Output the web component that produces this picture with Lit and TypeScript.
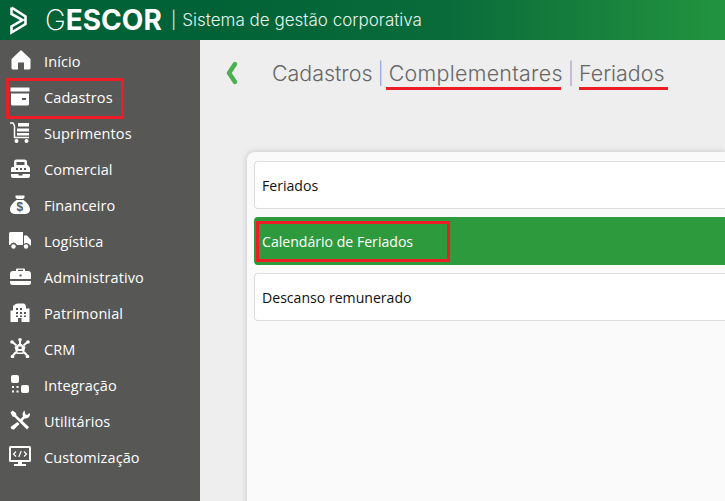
import { LitElement, html, css, svg } from "lit";
import { customElement } from "lit/decorators.js";

const icons: Record<string, unknown> = {
  home: svg`<path d="M9.5 0.5Q10 0.2 10.5 0.5L19.5 9V18Q19.5 19.5 18 19.5H13V12.5H7V19.5H2Q0.5 19.5 0.5 18V9Z"/>`,
  box: svg`<path d="M0.5 0.5H19.5V4.5H0.5Z"/><path fill-rule="evenodd" d="M1 6.5H19V17Q19 18.5 17.5 18.5H2.5Q1 18.5 1 17ZM12 11V13H16V11Z"/>`,
  cart: svg`<path d="M0 1H3L4.5 4V15.5H19" fill="none" stroke="#fff" stroke-width="1.5"/><path d="M8 1H19V4.5H8ZM7 6.5H19V9.5H7ZM7 11H19V13.5H7Z"/><circle cx="6.5" cy="19" r="2"/><circle cx="16.5" cy="19" r="2"/>`,
  bag: svg`<path fill-rule="evenodd" d="M3 8V3Q3 0.5 5.5 0.5H13.5Q16 0.5 16 3V5.5L18 7.5Q19 8.5 19 9.5V13H0V9.5Q0 8.5 1 8ZM5.5 3V6H13.5V3ZM5 9V11H7V9ZM9 9V11H11V9ZM13 9V11H15V9Z"/><path d="M0 15H7.5V16.5H11.5V15H19V17Q19 19 17 19H2Q0 19 0 17Z"/>`,
  money: svg`<path fill-rule="evenodd" d="M5.5 0.5H14.5V2.5L13 4H7L5.5 2.5ZM6.5 5H13.5C17 7.5 20 11 20 14.5C20 17.5 17.5 19 15 19H5C2.5 19 0 17.5 0 14.5C0 11 3 7.5 6.5 5Z"/><text x="10" y="16" font-size="12" font-weight="700" font-family="Liberation Sans" text-anchor="middle" fill="#575756">$</text>`,
  truck: svg`<path d="M0 1.5Q0 0 1.5 0H14V13H8Q7 10.5 4.5 10.5Q2 10.5 1.2 13H0ZM15 3.5H18L22 8V13.5H21Q20 11 17.5 11Q15.5 11 15 12Z"/><circle cx="4.5" cy="14.5" r="2.2"/><circle cx="17" cy="14.5" r="2.2"/>`,
  case: svg`<path fill-rule="evenodd" d="M6 3V1.5Q6 0.5 7 0.5H14Q15 0.5 15 1.5V3H18Q21 3 21 6V11H0V6Q0 3 3 3ZM8 1.8V3H13V1.8ZM9.5 6.5V8.5H11.5V6.5Z"/><path d="M0 13H21V14.5Q21 17 18.5 17H2.5Q0 17 0 14.5Z"/>`,
  city: svg`<path fill-rule="evenodd" d="M0.5 7.5H3V4Q3 2 4.5 2Q5 0.5 8 0.5H14Q16 1 16 4V5.5H19.5V19H11.5V15H8V19H0.5ZM6 5H8V7H6ZM10 5H12V7H10ZM6 9H8V11H6ZM10 9H12V11H10ZM14 9H16V11H14ZM6 12.5H8V14H6ZM10 12.5H12V14H10ZM14 12.5H16V14H14Z"/>`,
  crm: svg`<g stroke="#fff" stroke-width="2" fill="none"><path d="M10 2V6M2.5 4L6.5 7.5M17.5 4L13.5 7.5M2.5 18L6 14M17.5 18L14 14"/></g><circle cx="10" cy="1.8" r="1.8"/><circle cx="2" cy="4" r="1.8"/><circle cx="18" cy="4" r="1.8"/><circle cx="2.5" cy="18.5" r="1.8"/><circle cx="17.5" cy="18.5" r="1.8"/><path fill-rule="evenodd" d="M10 5L15.5 9L13.5 16H6.5L4.5 9ZM8.5 8.5V11H11.5V8.5ZM7.5 13V14.5H12.5V13Z"/>`,
  flow: svg`<rect x="1" y="0" width="8" height="8" rx="2"/><rect x="11" y="10" width="8" height="8" rx="2"/><path d="M2 11H4V13H2ZM6.5 11H8.5V13H6.5ZM2 15.5H4V17.5H2ZM6.5 15.5H8.5V17.5H6.5Z"/>`,
  tools: svg`<path d="M0.5 2.5L2.5 0.5L6 3L6.5 5.5L19 17L17 19.5L4.5 7L2.5 6.5Z"/><path d="M14.5 0.5Q13 1.5 12.5 4L13 6.5L10 9.5L12 11.5L14.5 8.5Q18.5 9 20 5Q20 3.5 19.5 3L17 5L15.5 4.5L15 3ZM7.5 12L9.5 14L4 19.5Q1 20 0.5 17Z"/>`,
  code: svg`<path fill-rule="evenodd" d="M1.5 0H20.5Q22 0 22 1.5V14.5Q22 16 20.5 16H1.5Q0 16 0 14.5V1.5Q0 0 1.5 0ZM2 2V14H20V2Z"/><path d="M9 16H13V18H17V20H5V18H9Z"/><path d="M7 5.5L4.5 8L7 10.5M15 5.5L17.5 8L15 10.5M12.2 5L9.8 11" fill="none" stroke="#fff" stroke-width="1.2"/>`,
};

const menu = [
  ["Início", "home", 1, 20, 20],
  ["Cadastros", "box", 0, 20, 19],
  ["Suprimentos", "cart", 0, 20, 21],
  ["Comercial", "bag", 1, 20, 19],
  ["Financeiro", "money", 0, 20, 19],
  ["Logística", "truck", -1, 22, 17],
  ["Administrativo", "case", 0, 21, 17],
  ["Patrimonial", "city", 0, 20, 19],
  ["CRM", "crm", 0, 20, 20],
  ["Integração", "flow", 0, 20, 18],
  ["Utilitários", "tools", 0, 20, 20],
  ["Customização", "code", -1, 22, 20],
] as const;

@customElement("app-root")
export class AppRoot extends LitElement {
  static styles = css`
    :host { display: block; width: 725px; height: 501px; overflow: hidden; position: relative; background: #eeeeee; }
    .header { height: 40px; display: flex; align-items: center; background: linear-gradient(90deg, #006236 0%, #006236 28%, #0a6b3a 62%, #22943f 100%); color: #fff; }
    .logo { width: 20px; height: 30px; margin-left: 9px; flex: none; }
    .brand { margin-left: 16px; font: 700 28px/40px "Inter", sans-serif; color: #fff; width: 117px; flex: none; white-space: nowrap; }
    .brand span { font-weight: 200; }
    .tag { margin-left: 9px; font: 300 17px/40px "Inter", sans-serif; color: #e6f4ee; white-space: nowrap; }
    .tag i { font-style: normal; margin-right: 6px; }
    .body { display: flex; height: 461px; }
    nav { width: 200px; flex: none; background: #575756; padding-top: 4px; box-sizing: border-box; }
    .item { height: 36px; display: flex; align-items: center; color: #fff; font: 400 14.5px/36px "Open Sans", sans-serif; letter-spacing: 0.1px; }
    .ico { width: 44px; flex: none; display: flex; padding: 0 0 4px 10px; box-sizing: border-box; }
    .ico svg { fill: #fff; display: block; }
    .main { flex: 1; min-width: 0; position: relative; }
    .crumbs { display: flex; align-items: center; height: 66px; }
    .back { margin-left: 23px; width: 18px; height: 26px; flex: none; }
    .path { margin-left: 31px; font: 300 21.4px/28px "Inter", sans-serif; color: #666; white-space: nowrap; display: flex; gap: 5px; }
    .path b { font-weight: 200; color: #5b9bd5; }
    .path .long { letter-spacing: 0.3px; }
    .card { margin: 46px 0 0 47px; height: 400px; background: #fafafa; border-radius: 8px 0 0 0; box-shadow: 0 0 6px rgba(0,0,0,.18); padding: 9px 0 0 7px; display: flex; flex-direction: column; gap: 8px; }
    .row { height: 48px; box-sizing: border-box; background: #fff; border: 1px solid #dedede; border-right: 0; border-radius: 4px 0 0 4px; font: 400 14.1px/47px "Open Sans", sans-serif; padding-left: 7px; color: #111; }
    .row.on { background: #2e9a3e; border-color: #2e9a3e; color: #fff; }
    .mark { position: absolute; border: 3px solid #ee1c25; box-sizing: border-box; pointer-events: none; }
    .line { position: absolute; height: 3px; background: #ee1c25; }
  `;

  render() {
    return html`
      <div class="header">
        <svg class="logo" viewBox="0 0 20 30"><path fill="none" stroke="#fff" stroke-width="2.6" stroke-linejoin="miter" d="M2.5 2.5V9L13.5 15L2.5 21.5V27.5L16.5 19V15M2.5 2.5L16.5 11.5V15"/></svg>
        <div class="brand"><span>G</span>ESCOR</div>
        <div class="tag"><i>|</i>Sistema de gestão corporativa</div>
      </div>
      <div class="body">
        <nav>
          ${menu.map(([t, k, o, w, h]) => html`<div class="item"><span class="ico"><svg style="margin-left:${o}px" width=${w} height=${h} viewBox="0 0 ${w} ${h}">${icons[k]}</svg></span>${t}</div>`)}
        </nav>
        <div class="main">
          <div class="crumbs">
            <svg class="back" viewBox="0 0 18 26"><path fill="none" stroke="#4caf50" stroke-width="4.5" stroke-linecap="round" stroke-linejoin="round" d="M12 4L6 13L12 22"/></svg>
            <div class="path"><span>Cadastros</span><b>|</b><span class="long">Complementares</span><b>|</b><span>Feriados</span></div>
          </div>
          <div class="card">
            <div class="row">Feriados</div>
            <div class="row on">Calendário de Feriados</div>
            <div class="row">Descanso remunerado</div>
          </div>
        </div>
      </div>
      <div class="mark" style="left:6px;top:78px;width:118px;height:41px"></div>
      <div class="mark" style="left:256px;top:221px;width:194px;height:41px"></div>
      <div class="line" style="left:386px;top:87px;width:175px"></div>
      <div class="line" style="left:579px;top:87px;width:89px"></div>
    `;
  }
}
